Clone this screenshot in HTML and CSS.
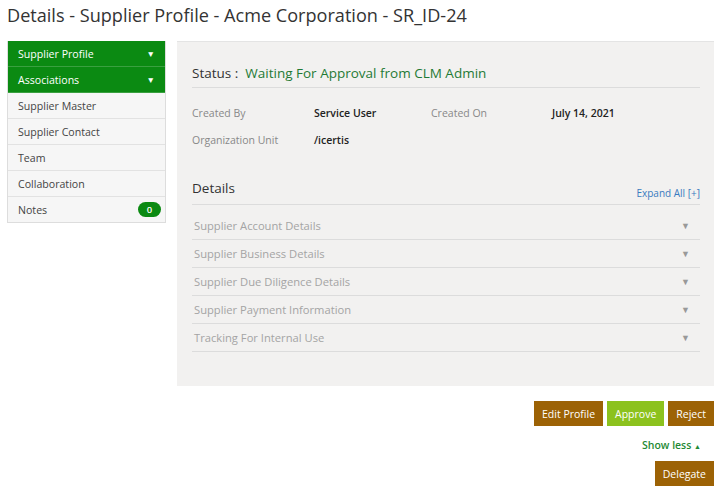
FILE: index.html
```html
<!DOCTYPE html>
<html>
<head>
<meta charset="utf-8">
<link rel="stylesheet" href="styles.css">
</head>
<body>
<div class="page">
  <h1 class="title">Details - Supplier Profile - Acme Corporation - SR_ID-24</h1>
  <div class="layout">
    <nav class="sidebar">
      <div class="nav-head">Supplier Profile <span class="caret">&#9660;</span></div>
      <div class="nav-head">Associations <span class="caret">&#9660;</span></div>
      <div class="nav-item">Supplier Master</div>
      <div class="nav-item">Supplier Contact</div>
      <div class="nav-item">Team</div>
      <div class="nav-item">Collaboration</div>
      <div class="nav-item">Notes <span class="badge">0</span></div>
    </nav>
    <main class="panel">
      <div class="status">Status :&nbsp; <span class="status-val">Waiting For Approval from CLM Admin</span></div>
      <div class="meta">
        <div class="meta-label">Created By</div>
        <div class="meta-val">Service User</div>
        <div class="meta-label">Created On</div>
        <div class="meta-val">July 14, 2021</div>
        <div class="meta-label">Organization Unit</div>
        <div class="meta-val">/icertis</div>
      </div>
      <div class="details-head">
        <span class="details-title">Details</span>
        <span class="expand">Expand All [+]</span>
      </div>
      <div class="acc-list">
        <div class="acc">Supplier Account Details <span class="acc-caret">&#9660;</span></div>
        <div class="acc">Supplier Business Details <span class="acc-caret">&#9660;</span></div>
        <div class="acc">Supplier Due Diligence Details <span class="acc-caret">&#9660;</span></div>
        <div class="acc">Supplier Payment Information <span class="acc-caret">&#9660;</span></div>
        <div class="acc">Tracking For Internal Use <span class="acc-caret">&#9660;</span></div>
      </div>
    </main>
  </div>
  <div class="actions">
    <div class="btn-row">
      <button class="btn brown">Edit Profile</button>
      <button class="btn lime">Approve</button>
      <button class="btn brown">Reject</button>
    </div>
    <div class="show-less">Show less <span class="up">&#9650;</span></div>
    <div class="btn-row">
      <button class="btn brown">Delegate</button>
    </div>
  </div>
</div>
</body>
</html>
```

FILE: styles.css
```css
* { box-sizing: border-box; }
body {
  margin: 0;
  background: #fff;
  font-family: "Open Sans", "Noto Sans", sans-serif;
  color: #333;
}
.page {
  width: 720px;
  padding: 0 6px 0 7px;
}
.title {
  margin: 0;
  height: 41px;
  padding-top: 3px;
  font-size: 18.1px;
  font-weight: 400;
  color: #333;
}
.layout {
  display: flex;
  align-items: flex-start;
  gap: 11px;
}
.sidebar {
  width: 159px;
  flex: none;
  border: 1px solid #ddd;
  border-top: none;
  font-size: 10.6px;
}
.nav-head {
  background: #0b8a12;
  color: #fff;
  height: 26px;
  padding: 0 10px;
  display: flex;
  align-items: center;
  justify-content: space-between;
  border-bottom: 1px solid #3aa040;
}
.caret { font-size: 8.5px; }
.nav-item {
  background: #f6f6f6;
  color: #444;
  height: 26px;
  padding: 0 4px 0 10px;
  display: flex;
  align-items: center;
  justify-content: space-between;
  border-top: 1px solid #e2e2e2;
}
.nav-head + .nav-item { border-top: none; height: 25px; }
.badge {
  background: #0b8a12;
  color: #fff;
  font-size: 9.5px;
  font-weight: 600;
  width: 23px;
  height: 15px;
  border-radius: 8px;
  display: flex;
  align-items: center;
  justify-content: center;
}
.panel {
  width: 537px;
  height: 345px;
  background: #f2f1f0;
  border-top: 1px solid #e4e4e4;
  padding: 22px 14px 0 15px;
}
.status {
  font-size: 13.5px;
  color: #333;
  height: 24px;
  border-bottom: 1px solid #dcdcdc;
}
.status-val { color: #1f7a35; }
.meta {
  display: grid;
  grid-template-columns: 122px 117px 121px auto;
  grid-auto-rows: 27px;
  margin-top: 11px;
  font-size: 10.5px;
  align-items: center;
}
.meta-label { color: #888; }
.meta-val { color: #222; font-weight: 600; }
.details-head {
  margin-top: 26px;
  display: flex;
  justify-content: space-between;
  align-items: flex-end;
  border-bottom: 1px solid #dcdcdc;
  padding-bottom: 7px;
}
.details-title { font-size: 13.5px; color: #333; }
.expand { font-size: 10px; color: #3a7bbf; margin-bottom: -3px; }
.acc-list { padding-top: 7px; }
.acc {
  height: 28px;
  border-bottom: 1px solid #dcdcdc;
  display: flex;
  align-items: center;
  justify-content: space-between;
  padding: 0 10px 0 2px;
  font-size: 11.2px;
  color: #a4a4a4;
}
.acc-caret { font-size: 9px; color: #999; }
.actions {
  display: flex;
  flex-direction: column;
  align-items: flex-end;
  padding-top: 15px;
}
.btn-row { display: flex; gap: 4px; }
.btn {
  border: none;
  color: #fff;
  font-family: inherit;
  font-size: 10.5px;
  height: 25px;
  padding: 0 8px;
  cursor: pointer;
}
.brown { background: #9c6205; }
.lime { background: #8cc21e; }
.show-less {
  color: #1f8a35;
  font-size: 10.5px;
  font-weight: 600;
  margin: 12px 13px 0 0;
  height: 23px;
}
.up { font-size: 7px; }
```
